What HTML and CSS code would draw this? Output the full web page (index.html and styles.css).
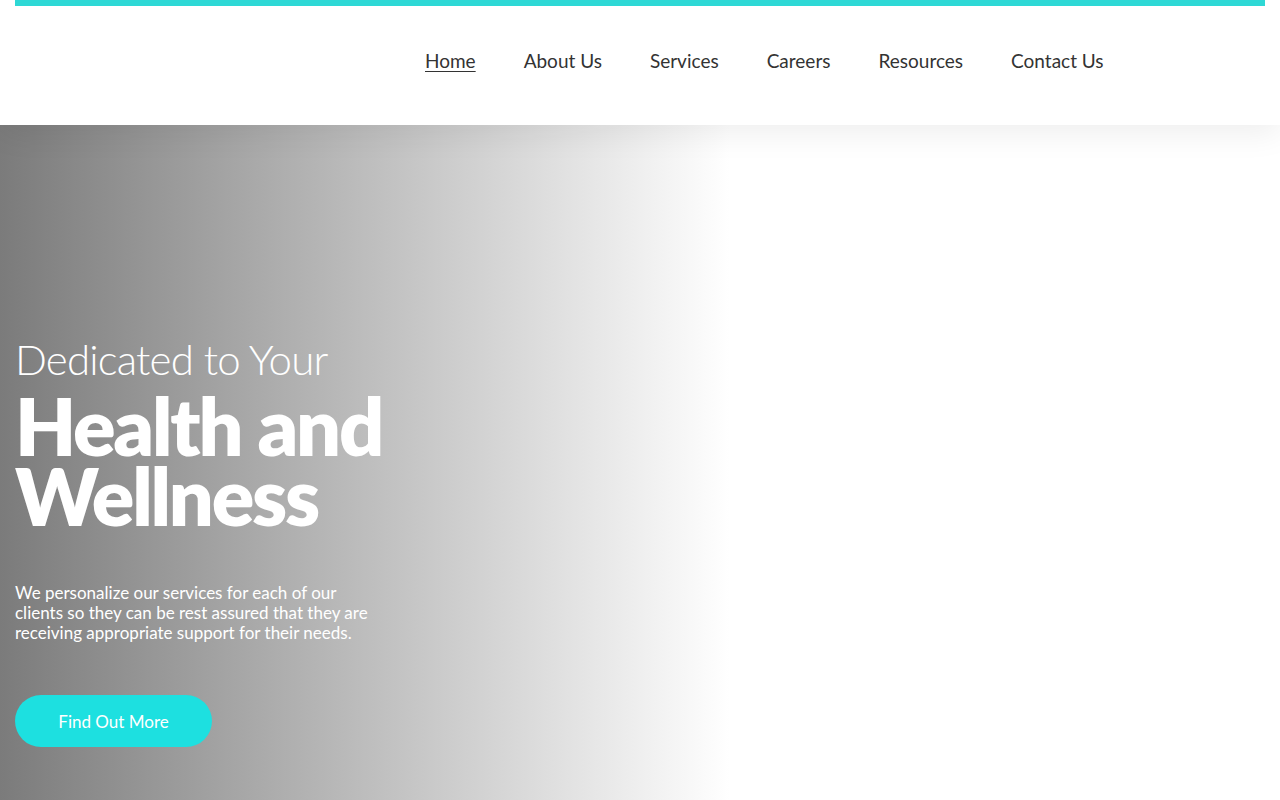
FILE: index.html
```html
<!DOCTYPE html>
<html lang="en">
<head>
<meta charset="utf-8">
<title>Health and Wellness</title>
<link rel="stylesheet" href="styles.css">
</head>
<body>
<header class="site-header">
  <div class="top-bar"></div>
  <nav class="main-nav">
    <a href="#" class="nav-link current">Home</a>
    <a href="#" class="nav-link">About Us</a>
    <a href="#" class="nav-link">Services</a>
    <a href="#" class="nav-link">Careers</a>
    <a href="#" class="nav-link">Resources</a>
    <a href="#" class="nav-link">Contact Us</a>
  </nav>
</header>
<section class="hero">
  <div class="hero-content">
    <h2 class="hero-kicker">Dedicated to Your</h2>
    <h1 class="hero-title">Health and<br>Wellness</h1>
    <p class="hero-text">We personalize our services for each of our clients so they can be rest assured that they are receiving appropriate support for their needs.</p>
    <a href="#" class="hero-button">Find Out More</a>
  </div>
</section>
</body>
</html>
```
FILE: styles.css
```css
* { box-sizing: border-box; }
html, body { margin: 0; padding: 0; }
body {
  font-family: "Lato", "Open Sans", sans-serif;
  background: #fff;
  color: #333;
  overflow: hidden;
  height: 800px;
}
.site-header {
  position: relative;
  z-index: 2;
  height: 125px;
  background: #fff;
  box-shadow: 0 8px 30px rgba(0, 0, 0, 0.07);
}
.top-bar {
  margin: 0 15px;
  height: 6px;
  background: #2ed8d5;
}
.main-nav {
  display: flex;
  padding-left: 401px;
  padding-top: 41px;
}
.nav-link {
  padding: 0 24px;
  font-size: 19px;
  line-height: 28px;
  color: #333;
  text-decoration: none;
}
.nav-link.current {
  text-decoration: underline;
  text-underline-offset: 3px;
  text-decoration-thickness: 1px;
}
.hero {
  height: 675px;
  background: linear-gradient(to right, #7b7b7b 0%, #ffffff 57%);
}
.hero-content {
  padding: 209px 0 0 15px;
  color: #fff;
}
.hero-kicker {
  margin: 0 0 7px;
  font-weight: 300;
  font-size: 42px;
  line-height: 50px;
  letter-spacing: -0.8px;
}
.hero-title {
  margin: 0;
  font-weight: 800;
  font-size: 79px;
  line-height: 70px;
  letter-spacing: -2.2px;
}
.hero-text {
  margin: 52px 0 0;
  width: 362px;
  font-size: 17px;
  line-height: 20px;
}
.hero-button {
  display: flex;
  align-items: center;
  justify-content: center;
  margin-top: 52px;
  width: 197px;
  height: 52px;
  border-radius: 26px;
  background: #1de0e0;
  color: #fff;
  font-size: 17px;
  text-decoration: none;
}
```
